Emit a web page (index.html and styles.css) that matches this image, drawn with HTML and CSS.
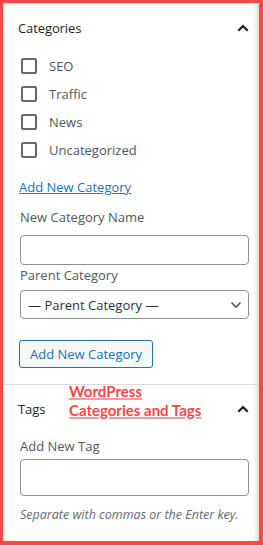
FILE: index.html
```html
<!DOCTYPE html>
<html>
<head>
<meta charset="utf-8">
<link rel="stylesheet" href="styles.css">
</head>
<body>
<div class="frame">
  <div class="panel">
    <section class="box">
      <div class="box-head">
        <h2 class="box-title">Categories</h2>
        <svg class="chev" width="12" height="8" viewBox="0 0 12 8"><path d="M1.3 6.7 L6 2 L10.7 6.7" fill="none" stroke="#1e1e1e" stroke-width="2.2"/></svg>
      </div>
      <ul class="cats">
        <li class="cat"><span class="cb"></span><span>SEO</span></li>
        <li class="cat"><span class="cb"></span><span>Traffic</span></li>
        <li class="cat"><span class="cb"></span><span>News</span></li>
        <li class="cat"><span class="cb"></span><span>Uncategorized</span></li>
      </ul>
      <a class="add-link" href="#">Add New Category</a>
      <label class="lbl lbl-name">New Category Name</label>
      <div class="input"></div>
      <label class="lbl lbl-parent">Parent Category</label>
      <div class="select">
        <span>— Parent Category —</span>
        <svg width="12" height="8" viewBox="0 0 12 8"><path d="M1.5 1.5 L6 6 L10.5 1.5" fill="none" stroke="#50575e" stroke-width="1.6"/></svg>
      </div>
      <button class="btn">Add New Category</button>
    </section>
    <section class="box tags">
      <div class="box-head">
        <h2 class="box-title">Tags</h2>
        <svg class="chev" width="12" height="8" viewBox="0 0 12 8"><path d="M1.3 6.7 L6 2 L10.7 6.7" fill="none" stroke="#1e1e1e" stroke-width="2.2"/></svg>
      </div>
      <div class="note">WordPress<br>Categories and Tags</div>
      <label class="lbl lbl-tag">Add New Tag</label>
      <div class="input tall"></div>
      <p class="help">Separate with commas or the Enter key.</p>
    </section>
  </div>
</div>
</body>
</html>
```
FILE: styles.css
```css
* { box-sizing: border-box; }
html, body { margin: 0; padding: 0; background: #fff; }
body {
  font-family: "Open Sans", "Noto Sans", sans-serif;
  font-size: 13px;
  color: #1e1e1e;
  width: 263px;
  height: 545px;
}
.frame {
  width: 263px;
  height: 545px;
  border-style: solid;
  border-color: #f44848;
  border-width: 3px 4px 4px 3px;
}
.panel {
  height: 100%;
  border-top: 1px solid #d8d8d8;
  border-left: 1px solid #e2e2e2;
  box-shadow: inset -5px 0 5px -3px rgba(0,0,0,0.18);
}
.box { padding: 0 10px 0 16px; }
.box-head {
  height: 48px;
  display: flex;
  align-items: center;
  justify-content: space-between;
  margin-left: -2px;
  padding-right: 0;
}
.box-title {
  margin: 0;
  font-size: 13px;
  font-weight: 500;
  color: #1e1e1e;
  letter-spacing: -0.1px;
}
.chev { display: block; }
.cats { list-style: none; margin: 0; padding: 0; }
.cat {
  height: 28px;
  display: flex;
  align-items: center;
  color: #50575e;
}
.cb {
  width: 16px;
  height: 16px;
  border: 2px solid #646970;
  border-radius: 2px;
  margin: 0 12px 0 1px;
}
.add-link {
  display: block;
  margin-top: 13px;
  color: #2271b1;
  text-decoration: underline;
  line-height: 20px;
  width: max-content;
  margin-left: -1px;
}
.lbl {
  display: block;
  color: #50575e;
  line-height: 20px;
}
.lbl-name { margin-top: 10px; margin-bottom: 8px; }
.lbl-parent { margin-top: 0; margin-bottom: 5px; }
.lbl-tag { margin-top: 3px; margin-bottom: 3px; }
.input {
  height: 30px;
  border: 1px solid #8c8f94;
  border-radius: 4px;
}
.input.tall { height: 37px; }
.select {
  height: 29px;
  border: 1px solid #8c8f94;
  border-radius: 4px;
  display: flex;
  align-items: center;
  justify-content: space-between;
  padding: 0 6px 0 7px;
  color: #2c3338;
}
.btn {
  display: block;
  margin: 21px 0 0 -1px;
  height: 28px;
  padding: 0 10px;
  border: 1px solid #2271b1;
  border-radius: 3px;
  background: #f6f7f7;
  color: #2271b1;
  font-family: inherit;
  font-size: 13px;
}
.tags {
  position: relative;
  margin-top: 16px;
  border-top: 1px solid #dcdcde;
}
.note {
  position: absolute;
  left: 65px;
  top: -3px;
  font-family: "Lato", sans-serif;
  font-weight: 700;
  font-size: 15px;
  line-height: 19px;
  color: #f44848;
  text-decoration: underline;
  text-decoration-color: rgba(244,72,72,0.55);
  text-decoration-thickness: 2px;
}
.help {
  margin: 10px 0 0;
  font-style: italic;
  color: #646970;
  font-size: 12.5px;
  line-height: 18px;
}
```
